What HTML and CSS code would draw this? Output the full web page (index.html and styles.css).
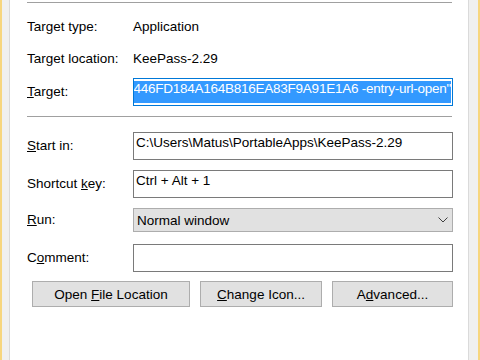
FILE: index.html
```html
<!DOCTYPE html>
<html lang="en">
  <head>
    <meta charset="UTF-8" />
    <title>KeePass Shortcut Properties</title>
    <link rel="stylesheet" href="styles.css">
  </head>
  <body>
    <div class="window">
      <div class="panel">
        <div class="sep"></div>

        <div class="info-row first">
          <span class="label">Target type:</span>
          <span class="value">Application</span>
        </div>
        <div class="info-row">
          <span class="label">Target location:</span>
          <span class="value">KeePass-2.29</span>
        </div>
        <div class="field-row target-row">
          <label class="label"><u>T</u>arget:</label>
          <div class="textbox focused">
            <span class="sel">446FD184A164B816EA83F9A91E1A6 -entry-url-open"</span>
          </div>
        </div>

        <div class="sep sep-mid"></div>

        <div class="field-row start-row">
          <label class="label"><u>S</u>tart in:</label>
          <div class="textbox">C:\Users\Matus\PortableApps\KeePass-2.29</div>
        </div>
        <div class="field-row">
          <label class="label">Shortcut <u>k</u>ey:</label>
          <div class="textbox">Ctrl + Alt + 1</div>
        </div>
        <div class="field-row">
          <label class="label"><u>R</u>un:</label>
          <div class="combo">
            <span>Normal window</span>
            <svg width="10" height="6" viewBox="0 0 10 6">
              <polyline points="0.5,0.5 5,5 9.5,0.5" fill="none" stroke="#404040" stroke-width="1" />
            </svg>
          </div>
        </div>
        <div class="field-row comment-row">
          <label class="label">C<u>o</u>mment:</label>
          <div class="textbox"></div>
        </div>

        <div class="buttons">
          <button class="btn btn-open">Open <u>F</u>ile Location</button>
          <button class="btn btn-icon"><u>C</u>hange Icon...</button>
          <button class="btn btn-adv">A<u>d</u>vanced...</button>
        </div>
      </div>
    </div>
  </body>
</html>
```

FILE: styles.css
```css
body {
  margin: 0;
  font-family: "Liberation Sans", Arial, sans-serif;
  font-size: 13.5px;
  color: #000;
}

.window {
  display: flex;
  height: 360px;
  box-sizing: border-box;
  background-color: #f0f0f0;
  border-left: 2px solid #f7d67f;
  border-right: 2px solid #f7d67f;
  padding: 0 9px 0 7px;
  overflow: hidden;
}

.panel {
  flex: 1;
  min-width: 0;
  background-color: #fff;
  border-left: 1px solid #dadada;
  border-right: 1px solid #dadada;
  padding: 2px 15px 0 17px;
}

.sep {
  height: 1px;
  background-color: #a0a0a0;
  margin-right: 1px;
}

.sep-mid {
  margin-top: 10px;
}

.label {
  width: 106px;
  flex: none;
  white-space: nowrap;
}

.info-row {
  display: flex;
  align-items: center;
  height: 32px;
}

.info-row.first {
  margin-top: 7px;
}

.field-row {
  display: flex;
  align-items: center;
  margin-top: 10px;
}

.field-row .label {
  padding-bottom: 2px;
}

.target-row {
  margin-top: 4px;
}

.start-row {
  margin-top: 15px;
}

.comment-row {
  margin-top: 12px;
}

.textbox {
  flex: 1;
  min-width: 0;
  height: 28px;
  box-sizing: border-box;
  border: 1px solid #7a7a7a;
  padding: 2px 2px;
  line-height: 16px;
  white-space: nowrap;
  overflow: hidden;
}

.textbox.focused {
  display: flex;
  justify-content: flex-end;
  border-color: #0078d7;
  padding-right: 1px;
}

.sel {
  flex: none;
  background-color: #3399ff;
  color: #fff;
  letter-spacing: -0.25px;
}

.combo {
  flex: 1;
  height: 24px;
  box-sizing: border-box;
  display: flex;
  align-items: center;
  justify-content: space-between;
  background-color: #e1e1e1;
  border: 1px solid #adadad;
  padding: 0 4px 0 3px;
}

.buttons {
  display: flex;
  gap: 10px;
  margin-top: 9px;
  margin-left: 5px;
}

.btn {
  height: 26px;
  box-sizing: border-box;
  background-color: #e1e1e1;
  border: 1px solid #adadad;
  font: inherit;
  color: #000;
  padding: 0;
}

.btn-open {
  width: 158px;
}

.btn-icon {
  width: 122px;
}

.btn-adv {
  flex: 1;
}
```
